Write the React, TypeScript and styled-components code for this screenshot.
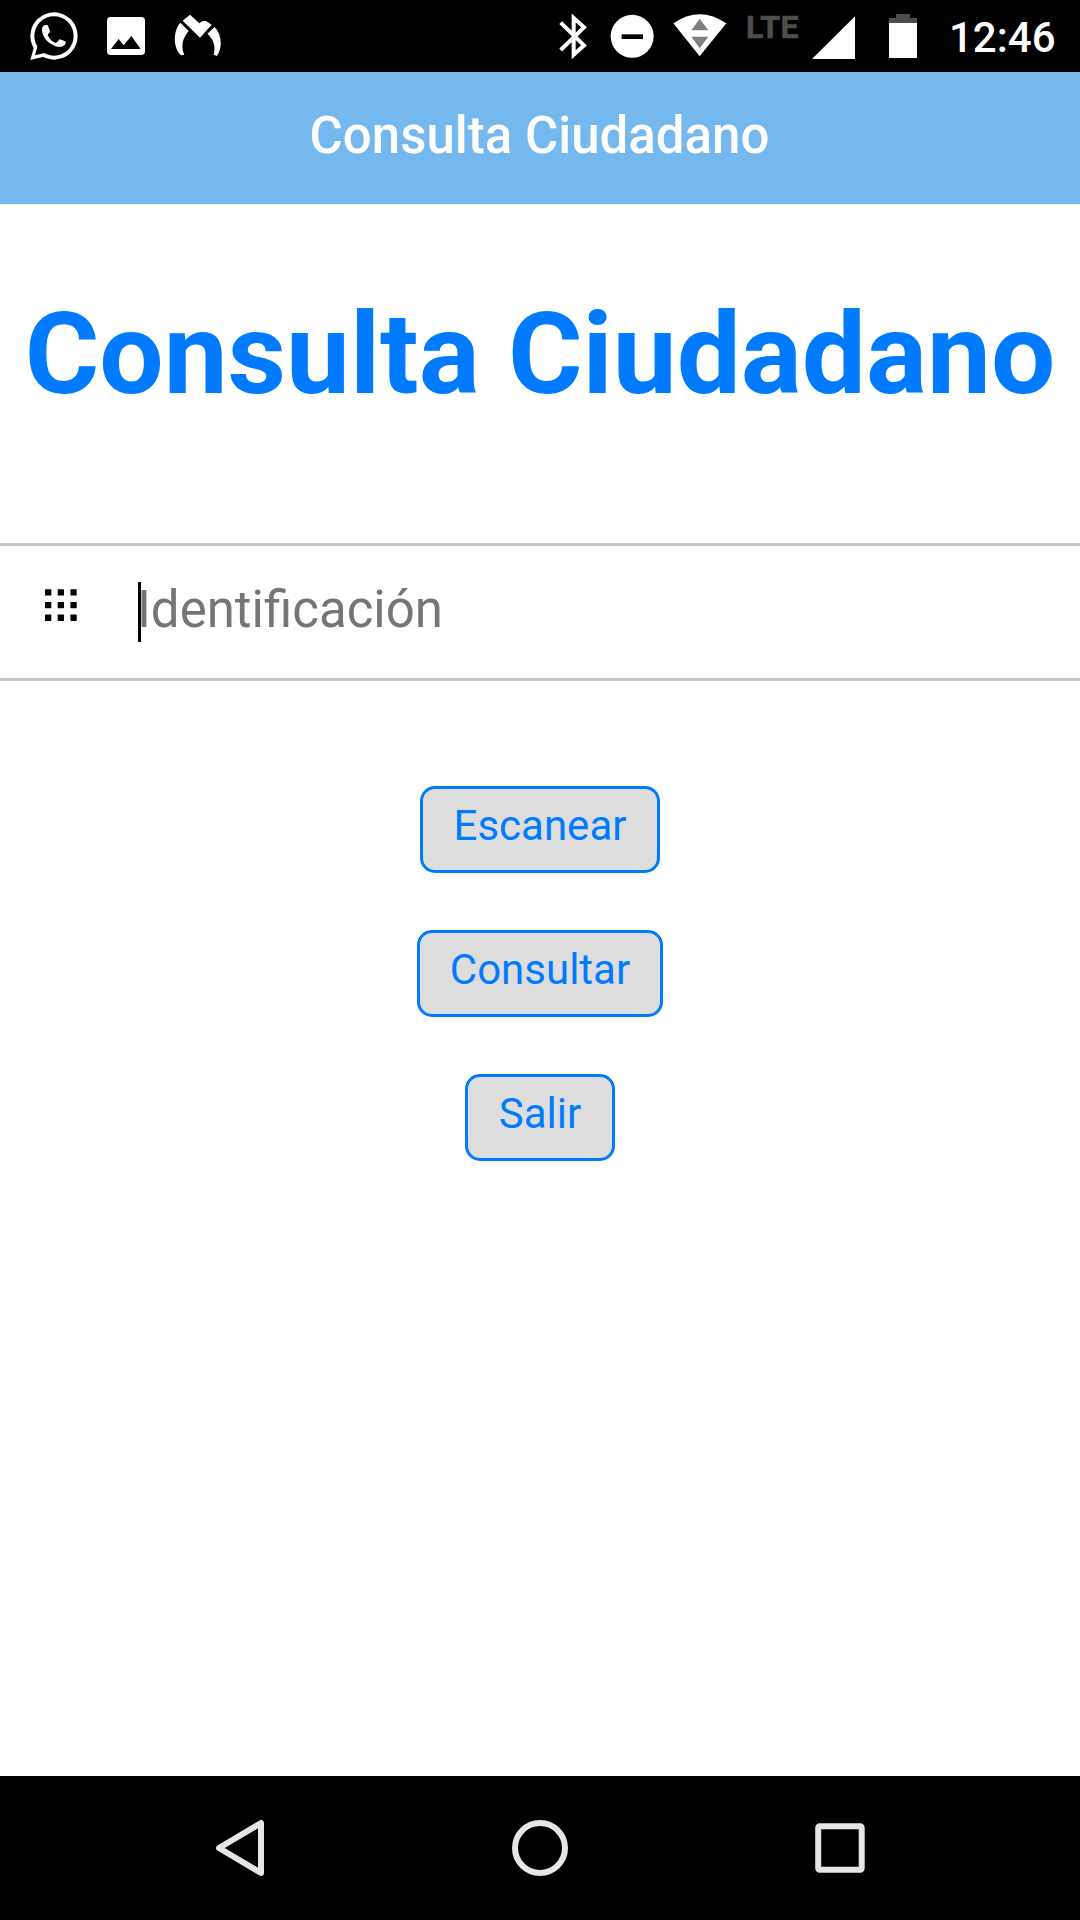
import React from "react";
import styled, { createGlobalStyle } from "styled-components";

const BLUE = "#007aff";

const GlobalStyle = createGlobalStyle`
  * { box-sizing: border-box; }
  body { margin: 0; background: #fff; font-family: Roboto, "Noto Sans", sans-serif; }
`;

const Screen = styled.div`
  width: 1080px;
  height: 1920px;
  display: flex;
  flex-direction: column;
  background: #fff;
  overflow: hidden;
`;

const StatusBar = styled.div`
  height: 72px;
  flex: none;
  background: #000;
  display: flex;
  justify-content: space-between;
`;

const StatusGroup = styled.div<{ $start?: number; $end?: number }>`
  display: flex;
  align-items: flex-start;
  padding-left: ${(p) => p.$start ?? 0}px;
  padding-right: ${(p) => p.$end ?? 0}px;
`;

const Glyph = styled.svg<{ $gap?: number }>`
  display: block;
  flex: none;
  margin-right: ${(p) => p.$gap ?? 0}px;
`;

const NetworkType = styled.span`
  width: 53px;
  margin-left: 1px;
  margin-right: 13px;
  font-size: 32px;
  font-weight: 700;
  letter-spacing: 0.4px;
  line-height: 54px;
  color: #4d4d4d;
  -webkit-text-stroke: 0.6px #4d4d4d;
  white-space: nowrap;
`;

const Clock = styled.time`
  width: 108px;
  font-size: 42px;
  font-weight: 500;
  line-height: 75px;
  color: #fff;
  white-space: nowrap;
`;

const Header = styled.header`
  height: 132px;
  flex: none;
  display: flex;
  align-items: center;
  justify-content: center;
  padding: 0 1px 5px 0;
  background: #74b8ee;
  color: #fff;
  font-size: 51px;
  font-weight: 500;
  line-height: 60px;
`;

const Content = styled.main`
  flex: 1;
  display: flex;
  flex-direction: column;
  align-items: center;
`;

const Heading = styled.h1`
  margin: 80px 0 119px;
  font-size: 114px;
  font-weight: 700;
  line-height: 140px;
  color: ${BLUE};
  white-space: nowrap;
`;

const Field = styled.label`
  width: 100%;
  height: 138px;
  display: flex;
  align-items: center;
  padding-left: 45px;
  border-top: 3px solid #c8c7cc;
  border-bottom: 3px solid #c8c7cc;
`;

const Caret = styled.i`
  width: 3px;
  height: 60px;
  margin-right: -4px;
  background: #000;
  z-index: 1;
`;

const Input = styled.input`
  flex: 1;
  height: 60px;
  padding: 0 0 5px;
  border: 0;
  outline: 0;
  background: transparent;
  font: 400 51px Roboto, "Noto Sans", sans-serif;
  color: #000;
  &::placeholder { color: #757575; opacity: 1; }
`;

const Actions = styled.div`
  display: flex;
  flex-direction: column;
  align-items: center;
  gap: 57px;
  margin-top: 105px;
`;

const Action = styled.button<{ $width: number }>`
  width: ${(p) => p.$width}px;
  height: 87px;
  padding: 0 0 8px;
  border: 3px solid ${BLUE};
  border-radius: 15px;
  background: #ddd;
  color: ${BLUE};
  font: 400 42px Roboto, "Noto Sans", sans-serif;
`;

const NavBar = styled.nav`
  height: 144px;
  flex: none;
  background: #000;
  display: flex;
  align-items: center;
  justify-content: center;
  gap: 240px;
`;

const actions = [
  { label: "Escanear", width: 240 },
  { label: "Consultar", width: 246 },
  { label: "Salir", width: 150 },
];

const dots = [0, 12.7, 25.4];

export default function App() {
  return (
    <Screen>
      <GlobalStyle />
      <StatusBar>
        <StatusGroup $start={30}>
          <Glyph width="50" height="72" viewBox="90 0 150 216" $gap={27}>
            <circle cx="162" cy="108" r="71" fill="#fff" />
            <path d="M91 180 L102 140 L131 170Z" fill="#fff" />
            <circle cx="162" cy="108" r="59" fill="#000" />
            <path d="M105 166 L113 137 L134 159Z" fill="#000" />
            <path d="M129 79 C133 74 140 74 143 76 L150 93 C151 98 144 101 143 105 C148 117 158 126 168 129 C173 128 175 121 179 118 L196 124 C199 132 194 137 187 139 C178 143 166 140 155 133 C140 124 130 110 127 98 C125 90 126 83 129 79Z" fill="#fff" />
          </Glyph>
          <Glyph width="38" height="72" viewBox="321 0 114 216" $gap={29}>
            <rect x="321" y="51" width="114" height="114" rx="11" fill="#fff" />
            <path d="M333 147 L356 117 L371 136 L394 108 L422 147Z" fill="#000" />
          </Glyph>
          <Glyph width="48" height="72" viewBox="521 0 144 216">
            <g fill="#fff">
              <path d="M569 44 L597 70 C603 63 611 61 618 64 L634 74 L599 113 L547 62Z" />
              <path d="M540 68 C519 91 516 142 542 166 L552 164 C543 144 543 119 565 93Z" />
              <path d="M643 81 C665 105 667 142 650 168 L640 164 C646 141 642 121 621 101Z" />
            </g>
          </Glyph>
        </StatusGroup>
        <StatusGroup $end={23}>
          <Glyph width="28" height="72" viewBox="88 0 84 216" $gap={23}>
            <path d="M93 68 L163 136 L132 164 V54 L163 82 L93 150" fill="none" stroke="#fff" strokeWidth="12" />
          </Glyph>
          <Glyph width="44" height="72" viewBox="241 0 132 216" $gap={19}>
            <circle cx="307.5" cy="109" r="64.5" fill="#fff" />
            <rect x="276" y="103" width="64" height="14" fill="#000" />
          </Glyph>
          <Glyph width="54" height="72" viewBox="431 0 162 216" $gap={18}>
            <path d="M432 70 Q511 15 591 70 L511 169Z" fill="#fff" />
            <path d="M486 91 L511 56 L537 91Z M486 110 H537 L511 145Z" fill="#808080" />
          </Glyph>
          <NetworkType>LTE</NetworkType>
          <Glyph width="43" height="72" viewBox="39 0 129 216" $gap={34}>
            <path d="M39 177 L168 49 V177Z" fill="#fff" />
          </Glyph>
          <Glyph width="28" height="72" viewBox="270 0 84 216" $gap={32}>
            <path d="M270 69 V54 H291 V42 H333 V54 H354 V69Z" fill="#4d4d4d" />
            <rect x="270" y="69" width="84" height="105" fill="#fff" />
          </Glyph>
          <Clock>12:46</Clock>
        </StatusGroup>
      </StatusBar>

      <Header>Consulta Ciudadano</Header>

      <Content>
        <Heading>Consulta Ciudadano</Heading>
        <Field>
          <Glyph width="32" height="46" viewBox="0 0 32 46" $gap={61}>
            {dots.map((y) =>
              dots.map((x) => <rect key={`${x}-${y}`} x={x} y={y + 0.2} width="6.3" height="6.3" rx="0.6" fill="#000" />)
            )}
          </Glyph>
          <Caret />
          <Input placeholder="Identificación" />
        </Field>
        <Actions>
          {actions.map((a) => (
            <Action key={a.label} $width={a.width}>{a.label}</Action>
          ))}
        </Actions>
      </Content>

      <NavBar>
        <Glyph width="60" height="60" viewBox="0 0 60 60">
          <path d="M9 30 L51 5 V55Z" fill="none" stroke="#e6e6e6" strokeWidth="6" strokeLinejoin="round" />
        </Glyph>
        <Glyph width="60" height="60" viewBox="0 0 60 60">
          <circle cx="30" cy="30" r="25" fill="none" stroke="#e6e6e6" strokeWidth="6" />
        </Glyph>
        <Glyph width="60" height="60" viewBox="0 0 60 60">
          <rect x="8.2" y="8.2" width="43.5" height="43.5" rx="1.5" fill="none" stroke="#e6e6e6" strokeWidth="6" />
        </Glyph>
      </NavBar>
    </Screen>
  );
}
